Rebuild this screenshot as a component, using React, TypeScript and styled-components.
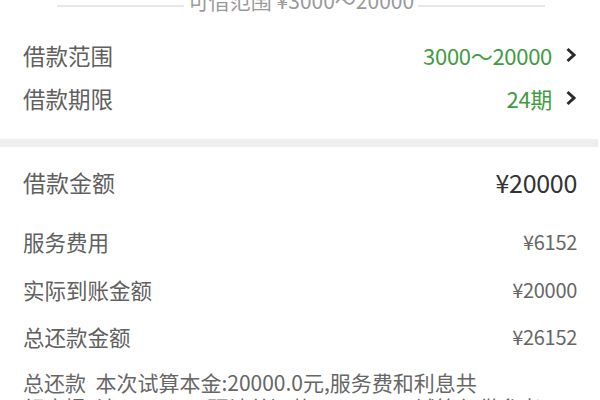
import React from 'react';
import styled, { createGlobalStyle } from 'styled-components';

const GlobalStyle = createGlobalStyle`
  html, body {
    margin: 0;
    padding: 0;
    background: #ffffff;
    overflow: hidden;
  }
  body {
    font-family: "Noto Sans CJK SC", "Noto Sans", sans-serif;
    color: #555;
  }
`;

const Page = styled.div`
  width: 600px;
  height: 400px;
  overflow: hidden;
  background: #fff;
`;

const Header = styled.div`
  display: flex;
  align-items: flex-end;
  margin: -12px 55px 0 57px;
  height: 24px;
`;

const HeaderLine = styled.div`
  flex: 1;
  height: 2px;
  background: #e8e8e8;
  margin-bottom: 5px;
`;

const HeaderText = styled.span`
  font-size: 21px;
  line-height: 24px;
  color: #9a9a9a;
  padding: 0 4px;
  white-space: nowrap;
`;

const Section = styled.div<{ $top: number; $bottom: number }>`
  padding: ${(p) => p.$top}px 23px ${(p) => p.$bottom}px 23px;
`;

const Row = styled.div<{ $h: number }>`
  display: flex;
  align-items: center;
  justify-content: space-between;
  height: ${(p) => p.$h}px;
`;

const Label = styled.span<{ $size: number }>`
  font-size: ${(p) => p.$size}px;
  color: #606060;
  white-space: nowrap;
`;

const Value = styled.span<{ $size: number; $color: string }>`
  font-size: ${(p) => p.$size}px;
  color: ${(p) => p.$color};
  white-space: nowrap;
  letter-spacing: -0.3px;
`;

const Picker = styled.div`
  display: flex;
  align-items: center;
  gap: 13px;
`;

const Divider = styled.div`
  height: 8px;
  margin-right: 2px;
  background: #eeeeee;
`;

const Note = styled.p`
  margin: 10px 0 0;
  font-size: 21px;
  line-height: 25px;
  color: #666;
`;

const Chevron = () => (
  <svg width="12" height="16" viewBox="0 0 12 16">
    <polyline points="2.5,2 9,8 2.5,14" fill="none" stroke="#2a2a2a" strokeWidth="3" />
  </svg>
);

const GREEN = '#3f9b3f';

export default function App() {
  return (
    <Page>
      <GlobalStyle />
      <Header>
        <HeaderLine />
        <HeaderText>可借范围 ¥3000～20000</HeaderText>
        <HeaderLine />
      </Header>

      <Section $top={21} $bottom={20}>
        <Row $h={43}>
          <Label $size={22.5}>借款范围</Label>
          <Picker>
            <Value $size={22} $color={GREEN}>3000～20000</Value>
            <Chevron />
          </Picker>
        </Row>
        <Row $h={43}>
          <Label $size={22.5}>借款期限</Label>
          <Picker>
            <Value $size={22} $color={GREEN}>24期</Value>
            <Chevron />
          </Picker>
        </Row>
      </Section>

      <Divider />

      <Section $top={0} $bottom={0}>
        <Row $h={70}>
          <Label $size={23}>借款金额</Label>
          <Value $size={25} $color="#333">¥20000</Value>
        </Row>
        <Row $h={48}>
          <Label $size={21.5}>服务费用</Label>
          <Value $size={20} $color="#666">¥6152</Value>
        </Row>
        <Row $h={48}>
          <Label $size={21.5}>实际到账金额</Label>
          <Value $size={20} $color="#666">¥20000</Value>
        </Row>
        <Row $h={47}>
          <Label $size={21.5}>总还款金额</Label>
          <Value $size={20} $color="#666">¥26152</Value>
        </Row>
        <Note>
          总还款&nbsp;&nbsp;本次试算本金:20000.0元,服务费和利息共
          <br />
          额度提&nbsp;&nbsp;计6152.0元,预计总还款26152.0元,试算仅供参考
        </Note>
      </Section>
    </Page>
  );
}
